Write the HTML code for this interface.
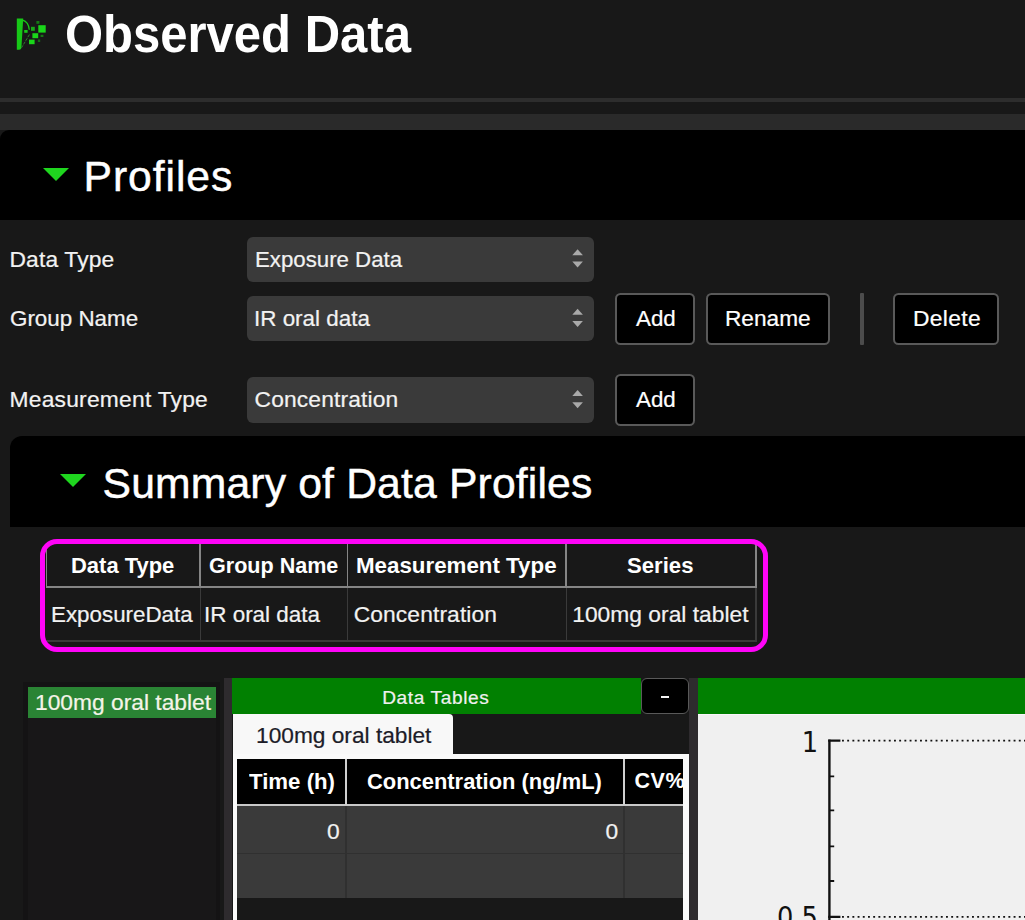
<!DOCTYPE html>
<html lang="en">
<head>
<meta charset="utf-8">
<title>Observed Data</title>
<style>
*{box-sizing:border-box;margin:0;padding:0}
html,body{width:1025px;height:920px;overflow:hidden;background:#181818}
body{position:relative;font-family:"Liberation Sans",sans-serif;color:#f2f2f2}
.abs,.tx{position:absolute}
.tx{white-space:nowrap;line-height:1;display:block}
.hr{left:0;top:98.2px;width:1025px;height:3.8px;background:#2d2d2d}
.band{left:0;top:113.7px;width:1025px;height:16.8px;background:#2a2a2a}
.phead{left:0;top:130.4px;width:1025px;height:90.1px;background:#000;border-top-left-radius:9px}
.tri{width:0;height:0;border-left:13px solid transparent;border-right:13px solid transparent;border-top:13px solid #1fd61f}
.sel{background:#3a3a3a;border-radius:6px;left:247.4px;width:346.6px;height:45.4px}
.btn{background:#000;border:2px solid #595959;border-radius:5.5px}
.sep{left:859.5px;top:292.5px;width:4px;height:52px;background:#4c4c4c;border-radius:1px}
.shead{left:9.7px;top:436.4px;width:1016px;height:90.6px;background:#000;border-top-left-radius:12px}
.pink{left:40px;top:539px;width:728px;height:112.6px;border:5px solid #ff04f8;border-radius:17px}
.ln{background:#858585}
.dl{background:#3a3a3a}
</style>
</head>
<body>
<!-- title bar -->
<svg class="abs" style="left:14px;top:16px" width="36" height="36" viewBox="14 16 36 36">
  <path d="M16.8 18.6 H23.2 L21.4 48 Q21 49.8 19.2 49.8 H16.8 Z" fill="#17c817"/>
  <path d="M22.6 20.2 Q28.6 22 29.3 29.8" fill="none" stroke="#17c817" stroke-width="1.3"/>
  <path d="M29.4 34.6 L21.6 47.6" fill="none" stroke="#2f8a2f" stroke-width="0.9" stroke-dasharray="3 1.2"/>
  <rect x="38.3" y="25.2" width="7.4" height="7.4" fill="#1ad61a"/>
  <rect x="32.4" y="33.2" width="5.8" height="5" fill="#1ad61a"/>
  <rect x="29" y="39.6" width="5.6" height="4.6" fill="#1ad61a"/>
  <rect x="31" y="26.8" width="3.8" height="4" fill="#18a818"/>
  <rect x="36.4" y="21" width="3" height="2.8" fill="#157a15"/>
  <rect x="24.2" y="30" width="3.4" height="2.8" fill="#18c818"/>
  <rect x="40.6" y="34.8" width="2.8" height="2.2" fill="#157a15"/>
  <rect x="37.9" y="39.4" width="2.3" height="2.6" fill="#146a14"/>
</svg>
<div class="abs hr"></div>
<div class="abs band"></div>

<!-- Profiles header -->
<div class="abs phead"></div>
<div class="abs tri" style="left:43px;top:167.6px"></div>

<!-- form -->
<div class="abs sel" style="top:236.5px"></div>
<div class="abs sel" style="top:296px"></div>
<div class="abs sel" style="top:377.2px"></div>
<svg class="abs" style="left:570px;top:246px" width="16" height="186" viewBox="0 0 16 186">
  <g fill="#a9a9a9">
    <path d="M2.3 9.2 L7.6 3.2 L12.899999999999999 9.2 Z"/><path d="M2.3 15.600000000000001 L12.899999999999999 15.600000000000001 L7.6 21.599999999999998 Z"/>
    <path d="M2.3 68.7 L7.6 62.7 L12.899999999999999 68.7 Z"/><path d="M2.3 75.10000000000001 L12.899999999999999 75.10000000000001 L7.6 81.1 Z"/>
    <path d="M2.3 149.9 L7.6 143.9 L12.899999999999999 149.9 Z"/><path d="M2.3 156.3 L12.899999999999999 156.3 L7.6 162.3 Z"/>
  </g>
</svg>
<div class="abs btn" style="left:615.4px;top:292.6px;width:79.8px;height:52.3px"></div>
<div class="abs btn" style="left:705.7px;top:292.6px;width:124.3px;height:52.3px"></div>
<div class="abs sep"></div>
<div class="abs btn" style="left:893.2px;top:292.6px;width:105.8px;height:52.3px"></div>
<div class="abs btn" style="left:615.4px;top:373.7px;width:79.8px;height:52.4px"></div>

<!-- Summary header -->
<div class="abs shead"></div>
<div class="abs tri" style="left:60px;top:474.4px"></div>

<!-- summary table -->
<div class="abs ln" style="left:46.2px;top:544px;width:1.3px;height:43px"></div>
<div class="abs ln" style="left:199px;top:544px;width:1.8px;height:43px"></div>
<div class="abs ln" style="left:346.6px;top:544px;width:1.8px;height:43px"></div>
<div class="abs ln" style="left:565.4px;top:544px;width:1.8px;height:43px"></div>
<div class="abs ln" style="left:755.2px;top:544px;width:1.5px;height:43px"></div>
<div class="abs ln" style="left:46.2px;top:586px;width:710.5px;height:2px"></div>
<div class="abs dl" style="left:199.6px;top:588px;width:1.2px;height:53px"></div>
<div class="abs dl" style="left:347px;top:588px;width:1.2px;height:53px"></div>
<div class="abs dl" style="left:565.8px;top:588px;width:1.2px;height:53px"></div>
<div class="abs dl" style="left:755.4px;top:588px;width:1.2px;height:53px"></div>
<div class="abs dl" style="left:46.2px;top:640px;width:710.5px;height:1.5px"></div>
<div class="abs pink"></div>

<!-- series list -->
<div class="abs" style="left:22.5px;top:682px;width:197px;height:240px;background:#141314"></div>
<div class="abs" style="left:27.6px;top:687px;width:188px;height:233px;background:#181718"></div>
<div class="abs" style="left:27.6px;top:687px;width:188px;height:31px;background:#2a8434"></div>

<!-- splitters -->
<div class="abs" style="left:223.8px;top:678px;width:8.4px;height:242px;background:#2e2b2e"></div>
<div class="abs" style="left:689.4px;top:678px;width:8.7px;height:242px;background:#2e2b2e"></div>

<!-- data tables panel -->
<div class="abs" style="left:232.1px;top:677.9px;width:409.1px;height:36.3px;background:#018001"></div>
<div class="abs btn" style="left:641.2px;top:678.4px;width:47.6px;height:35.8px;border-width:1.5px;border-radius:6px"></div>
<div class="abs" style="left:661px;top:695.8px;width:7.5px;height:2.2px;background:#f4f4f4"></div>
<div class="abs" style="left:232.6px;top:714.4px;width:456.6px;height:40px;background:#181818"></div>
<div class="abs" style="left:232.6px;top:714.4px;width:220.2px;height:40px;background:#f8f8f8;border-top-right-radius:4px"></div>
<!-- white frame -->
<div class="abs" style="left:232.6px;top:753.6px;width:456.6px;height:167px;background:#fafafa"></div>
<div class="abs" style="left:237.4px;top:759.2px;width:445.2px;height:161px;background:#181818;overflow:hidden"></div>
<!-- table header -->
<div class="abs" style="left:237.4px;top:759.2px;width:445.2px;height:45.4px;background:#000"></div>
<div class="abs" style="left:237.4px;top:804.2px;width:445.2px;height:1.8px;background:#c8c8c8"></div>
<div class="abs" style="left:345px;top:759.2px;width:1.8px;height:46px;background:#d0d0d0"></div>
<div class="abs" style="left:623px;top:759.2px;width:1.8px;height:46px;background:#d0d0d0"></div>
<!-- rows -->
<div class="abs" style="left:237.4px;top:806px;width:445.2px;height:92.3px;background:#3a3a3a"></div>
<div class="abs" style="left:237.4px;top:853.2px;width:445.2px;height:1.3px;background:#303030"></div>
<div class="abs" style="left:345.2px;top:806px;width:1.4px;height:92.3px;background:#303030"></div>
<div class="abs" style="left:623.2px;top:806px;width:1.4px;height:92.3px;background:#303030"></div>
<!-- CV% clipped -->
<div class="abs" style="left:624.8px;top:759.2px;width:57.8px;height:45px;overflow:hidden"><span class="tx" style="left:9.6px;top:11.6px;font-size:21.5px;font-weight:700;color:#fff;letter-spacing:0.6px">CV%</span></div>

<!-- chart panel -->
<div class="abs" style="left:698.1px;top:677.9px;width:327px;height:36.2px;background:#018001"></div>
<div class="abs" style="left:698.1px;top:714px;width:327px;height:206px;background:#f0f0f0;border-top:1.6px solid #fbf6fb"></div>
<svg class="abs" style="left:698px;top:714px" width="327" height="206" viewBox="698 714 327 206">
  <g stroke="#111" fill="none">
    <path d="M829.4 739.6 V920" stroke-width="2.4"/>
    <path d="M828.2 740.6 H840.4 M828.2 916.8 H840.4" stroke-width="2.2"/>
    <path d="M829 776.4 H834.2 M829 810.4 H834.2 M829 846.4 H834.2 M829 881 H834.2" stroke-width="1.8"/>
    <path d="M842 740.6 H1025 M842 916.8 H1025" stroke-width="1.7" stroke-dasharray="1.9 3.3"/>
  </g>
  <g font-family="'DejaVu Sans Condensed','DejaVu Sans',sans-serif" font-size="28.6" fill="#111" text-anchor="end">
    <text x="818" y="752.2">1</text>
    <text x="818" y="926.8">0.5</text>
  </g>
</svg>

<span class="tx" style="left:64.83px;top:8.44px;font-size:52.4px;font-weight:700;color:#ffffff;transform:scaleX(0.9353);transform-origin:0 0;">Observed Data</span>
<span class="tx" style="left:83.60px;top:155.45px;font-size:42.7px;color:#ffffff;-webkit-text-stroke:0.45px #ffffff;letter-spacing:0.915px;">Profiles</span>
<span class="tx" style="left:9.50px;top:247.90px;font-size:22.8px;color:#f2f2f2;-webkit-text-stroke:0.22px #f2f2f2;letter-spacing:0.159px;">Data Type</span>
<span class="tx" style="left:9.52px;top:307.10px;font-size:22.8px;color:#f2f2f2;-webkit-text-stroke:0.22px #f2f2f2;transform:scaleX(0.9820);transform-origin:0 0;">Group Name</span>
<span class="tx" style="left:9.50px;top:388.10px;font-size:22.8px;color:#f2f2f2;-webkit-text-stroke:0.22px #f2f2f2;letter-spacing:0.236px;">Measurement Type</span>
<span class="tx" style="left:254.62px;top:247.90px;font-size:22.8px;color:#f2f2f2;-webkit-text-stroke:0.22px #f2f2f2;transform:scaleX(0.9752);transform-origin:0 0;">Exposure Data</span>
<span class="tx" style="left:253.63px;top:307.10px;font-size:22.8px;color:#f2f2f2;-webkit-text-stroke:0.22px #f2f2f2;transform:scaleX(0.9831);transform-origin:0 0;">IR oral data</span>
<span class="tx" style="left:254.60px;top:388.10px;font-size:22.8px;color:#f2f2f2;-webkit-text-stroke:0.22px #f2f2f2;letter-spacing:0.137px;">Concentration</span>
<span class="tx" style="left:635.50px;top:307.00px;font-size:22.8px;color:#ffffff;-webkit-text-stroke:0.22px #ffffff;transform:scaleX(0.9803);transform-origin:0 0;">Add</span>
<span class="tx" style="left:725.01px;top:307.00px;font-size:22.8px;color:#ffffff;-webkit-text-stroke:0.22px #ffffff;transform:scaleX(0.9942);transform-origin:0 0;">Rename</span>
<span class="tx" style="left:913.00px;top:307.00px;font-size:22.8px;color:#ffffff;-webkit-text-stroke:0.22px #ffffff;letter-spacing:0.356px;">Delete</span>
<span class="tx" style="left:635.50px;top:388.00px;font-size:22.8px;color:#ffffff;-webkit-text-stroke:0.22px #ffffff;transform:scaleX(0.9803);transform-origin:0 0;">Add</span>
<span class="tx" style="left:102.50px;top:462.35px;font-size:42.7px;color:#ffffff;-webkit-text-stroke:0.45px #ffffff;letter-spacing:0.153px;">Summary of Data Profiles</span>
<span class="tx" style="left:71.03px;top:555.07px;font-size:22.6px;font-weight:700;color:#ffffff;transform:scaleX(0.9719);transform-origin:0 0;">Data Type</span>
<span class="tx" style="left:208.70px;top:555.07px;font-size:22.6px;font-weight:700;color:#ffffff;transform:scaleX(0.9539);transform-origin:0 0;">Group Name</span>
<span class="tx" style="left:356.01px;top:555.07px;font-size:22.6px;font-weight:700;color:#ffffff;transform:scaleX(0.9880);transform-origin:0 0;">Measurement Type</span>
<span class="tx" style="left:626.80px;top:555.07px;font-size:22.6px;font-weight:700;color:#ffffff;transform:scaleX(0.9796);transform-origin:0 0;">Series</span>
<span class="tx" style="left:50.92px;top:603.30px;font-size:22.8px;color:#f2f2f2;-webkit-text-stroke:0.22px #f2f2f2;transform:scaleX(0.9806);transform-origin:0 0;">ExposureData</span>
<span class="tx" style="left:204.43px;top:603.30px;font-size:22.8px;color:#f2f2f2;-webkit-text-stroke:0.22px #f2f2f2;transform:scaleX(0.9839);transform-origin:0 0;">IR oral data</span>
<span class="tx" style="left:353.70px;top:603.30px;font-size:22.8px;color:#f2f2f2;-webkit-text-stroke:0.22px #f2f2f2;letter-spacing:0.112px;">Concentration</span>
<span class="tx" style="left:572.20px;top:603.30px;font-size:22.8px;color:#f2f2f2;-webkit-text-stroke:0.22px #f2f2f2;letter-spacing:0.018px;">100mg oral tablet</span>
<span class="tx" style="left:35.30px;top:691.00px;font-size:22.8px;color:#f4f4e8;-webkit-text-stroke:0.22px #f4f4e8;transform:scaleX(0.9993);transform-origin:0 0;">100mg oral tablet</span>
<span class="tx" style="left:382.20px;top:687.53px;font-size:19.1px;color:#f0f0f0;-webkit-text-stroke:0.22px #f0f0f0;letter-spacing:0.612px;">Data Tables</span>
<span class="tx" style="left:255.50px;top:724.10px;font-size:22.8px;color:#1c1c28;-webkit-text-stroke:0.22px #1c1c28;transform:scaleX(0.9959);transform-origin:0 0;">100mg oral tablet</span>
<span class="tx" style="left:249.00px;top:770.77px;font-size:22.6px;font-weight:700;color:#ffffff;transform:scaleX(0.9836);transform-origin:0 0;">Time (h)</span>
<span class="tx" style="left:367.40px;top:770.77px;font-size:22.6px;font-weight:700;color:#ffffff;transform:scaleX(0.9694);transform-origin:0 0;">Concentration (ng/mL)</span>
<span class="tx" style="left:327.00px;top:819.80px;font-size:22.8px;color:#f2f2f2;-webkit-text-stroke:0.22px #f2f2f2;">0</span>
<span class="tx" style="left:605.50px;top:819.80px;font-size:22.8px;color:#f2f2f2;-webkit-text-stroke:0.22px #f2f2f2;">0</span>
</body>
</html>
